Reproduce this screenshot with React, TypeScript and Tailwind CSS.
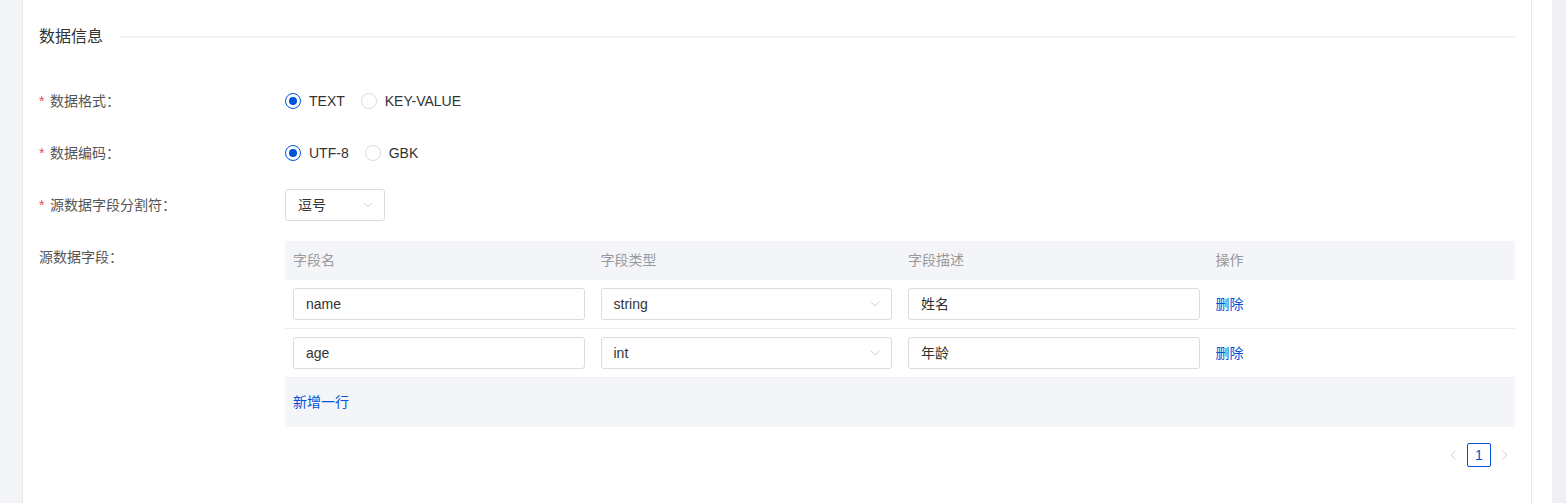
import { ChevronDown, ChevronLeft, ChevronRight } from "lucide-react";

const font = "font-[Liberation_Sans,Noto_Sans_CJK_SC,sans-serif]";

function Radio({ label, checked }: { label: string; checked?: boolean }) {
  return (
    <label className="flex items-center gap-2 mr-4 text-[14px] text-[#333]">
      <span
        className={
          checked
            ? "w-4 h-4 rounded-full border border-[#0052d9] flex items-center justify-center"
            : "w-4 h-4 rounded-full border border-[#dcdcdc]"
        }
      >
        {checked && <span className="w-2 h-2 rounded-full bg-[#0052d9]" />}
      </span>
      {label}
    </label>
  );
}

function Label({ text, required }: { text: string; required?: boolean }) {
  return (
    <div className="w-[246px] shrink-0 h-8 flex items-center text-[14px] text-[#555]">
      {required && <span className="text-[#e34d59] mr-[5px] w-[6px]">*</span>}
      {text}：
    </div>
  );
}

function Input({ value }: { value: string }) {
  return (
    <div className="h-8 border border-[#dcdcdc] rounded-[3px] px-3 flex items-center text-[14px] text-[#333] bg-white">
      {value}
    </div>
  );
}

function Select({ value }: { value: string }) {
  return (
    <div className="h-8 border border-[#dcdcdc] rounded-[3px] pl-3 pr-2 flex items-center justify-between text-[14px] text-[#333] bg-white">
      <span>{value}</span>
      <ChevronDown className="w-4 h-4 text-[#c5c5c5]" strokeWidth={1.2} />
    </div>
  );
}

const rows = [
  { name: "name", type: "string", desc: "姓名" },
  { name: "age", type: "int", desc: "年龄" },
];

export default function App() {
  return (
    <div className={`${font} flex h-[503px] overflow-hidden bg-white`}>
      <div className="w-[22px] shrink-0 bg-[#f3f4f8]" />
      <div className="w-[1510px] shrink-0 border-x border-[#e7e7e7] bg-white px-4 pt-[25px]">
        <div className="flex items-center h-6">
          <span className="text-[16px] text-[#333]">数据信息</span>
          <div className="flex-1 h-[2px] bg-[#f3f3f3] ml-[17px]" />
        </div>

        <div className="mt-[36px] flex flex-col gap-5">
          <div className="flex items-center">
            <Label text="数据格式" required />
            <Radio label="TEXT" checked />
            <Radio label="KEY-VALUE" />
          </div>
          <div className="flex items-center">
            <Label text="数据编码" required />
            <Radio label="UTF-8" checked />
            <Radio label="GBK" />
          </div>
          <div className="flex items-center">
            <Label text="源数据字段分割符" required />
            <div className="w-[100px]">
              <Select value="逗号" />
            </div>
          </div>
          <div className="flex items-start">
            <Label text="源数据字段" />
            <div className="flex-1">
              <div className="grid grid-cols-4 h-[39px] items-center bg-[#f4f5f9] text-[14px] text-[#999]">
                <div className="px-2">字段名</div>
                <div className="px-2">字段类型</div>
                <div className="px-2">字段描述</div>
                <div className="px-2">操作</div>
              </div>
              {rows.map((r) => (
                <div key={r.name} className="grid grid-cols-4 items-center py-2 border-b border-[#eeeeee]">
                  <div className="px-2">
                    <Input value={r.name} />
                  </div>
                  <div className="px-2">
                    <Select value={r.type} />
                  </div>
                  <div className="px-2">
                    <Input value={r.desc} />
                  </div>
                  <div className="px-2 text-[14px] text-[#0052d9]">删除</div>
                </div>
              ))}
              <div className="h-[49px] bg-[#f4f5f9] flex items-center px-2 text-[14px] text-[#0052d9]">
                新增一行
              </div>
              <div className="flex justify-end items-center mt-4 gap-[6px] pr-[2px]">
                <ChevronLeft className="w-4 h-4 text-[#c8c8c8]" strokeWidth={1.3} />
                <div className="w-6 h-6 border border-[#0052d9] rounded-[2px] flex items-center justify-center text-[14px] text-[#0052d9]">
                  1
                </div>
                <ChevronRight className="w-4 h-4 text-[#c8c8c8]" strokeWidth={1.3} />
              </div>
            </div>
          </div>
        </div>
      </div>
      <div className="w-5 shrink-0 bg-white" />
      <div className="flex-1 bg-[#eef0f5]" />
    </div>
  );
}
